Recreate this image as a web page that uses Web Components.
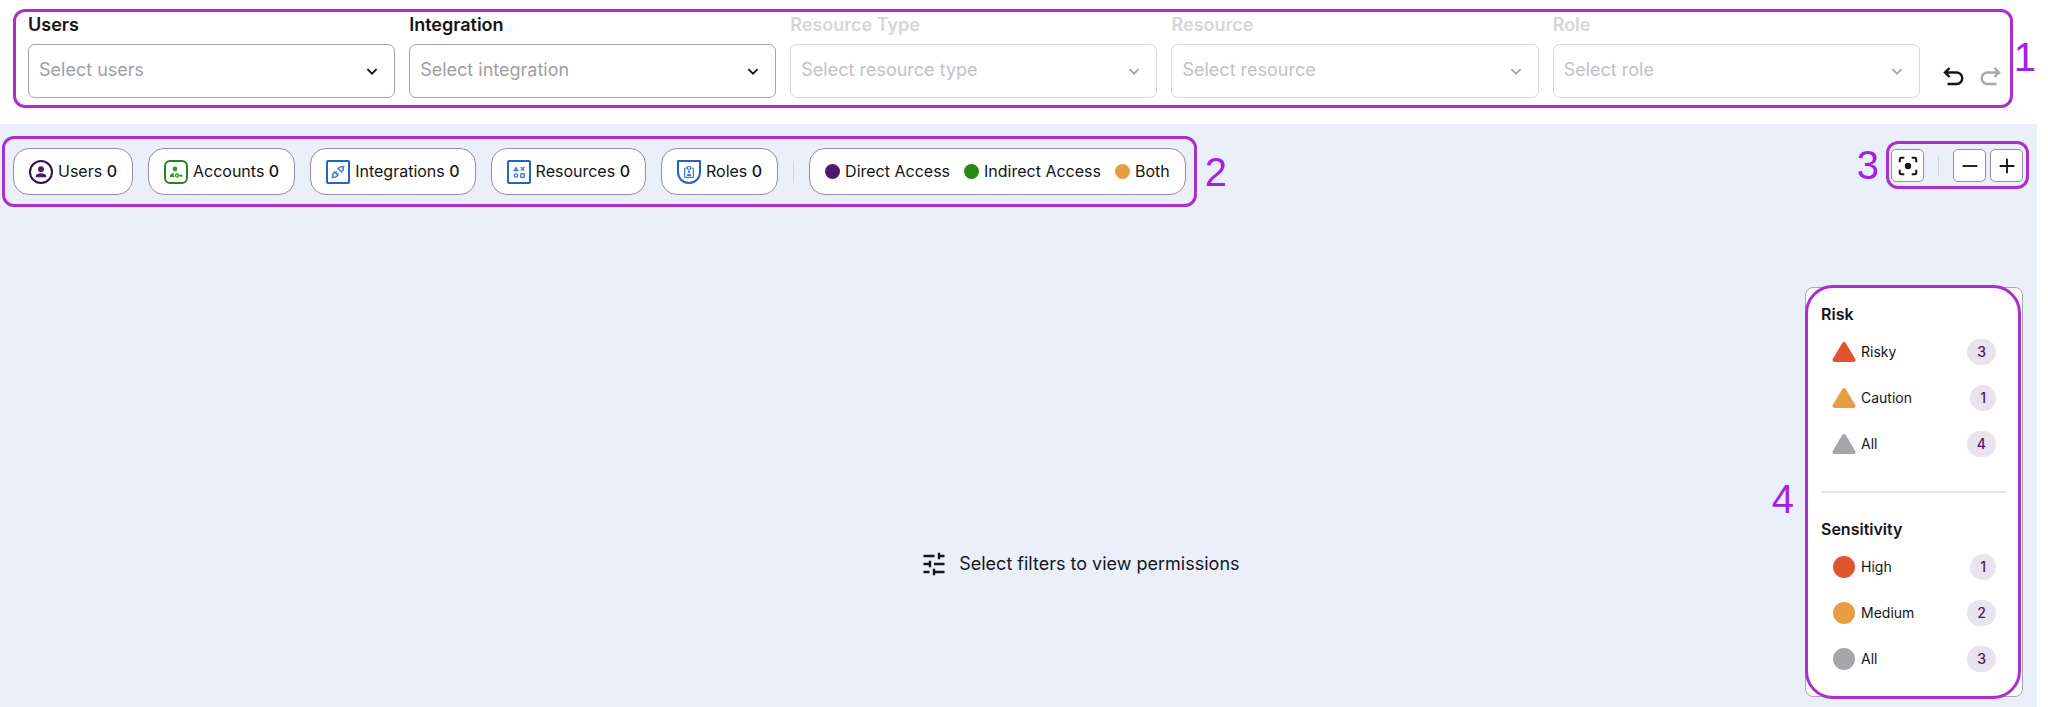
<!DOCTYPE html>
<html lang="en">
<head>
<meta charset="utf-8">
<title>Permissions</title>
<style>
    body {
        margin: 0;
        background: #fefefe;
        color: #141416;
        font-family: Inter, "Open Sans", sans-serif;
        --mark: #ab2fce;
        --line: #9a8aa5;
    }
</style>
</head>
<body>
<access-page></access-page>

<script>
const icons = {
    users: `<circle cx="12" cy="12" r="11" fill="#fff" stroke="#33104f" stroke-width="2"/>
        <circle cx="12" cy="9.2" r="2.9" fill="#4a1a6b"/><path d="M6.8 17.2V16c0-1.800 2.500-2.800 5.200-2.800s5.200 1 5.200 2.800v1.200z" fill="#4a1a6b"/>`,
    accounts: `<rect x="1" y="1" width="22" height="22" rx="5" fill="#fff" stroke="#1c8a14" stroke-width="2"/>
        <circle cx="11" cy="9" r="2.4" fill="#2c9a25"/><path d="M6 17v-1.200c0-1.500 1.700-2.600 4.200-2.800-.8 1.300-.6 2.800.5 4z" fill="#2c9a25"/>
        <circle cx="13" cy="15.5" r="1.5" fill="none" stroke="#2c9a25" stroke-width="1.3"/><path d="M14.500 15.500H18.500M17.300 15.500v1.500" fill="none" stroke="#2c9a25" stroke-width="1.3"/>`,
    integrations: `<rect x="1" y="1" width="22" height="22" rx="1" fill="#fff" stroke="#2563c4" stroke-width="2"/>
        <g transform="rotate(45 12 12)" fill="none" stroke="#3b78dc" stroke-width="1.4">
        <path d="M12 3v2.500M9.800 9.500V7.700a2.200 2.200 0 0 1 4.400 0v1.800M8.800 9.600h6.400M12 21v-2.500M9.800 14.500v1.800a2.200 2.200 0 0 0 4.400 0v-1.800M8.800 14.400h6.400M10.800 14.400v-2M13.200 14.400v-2"/></g>`,
    resources: `<rect x="1" y="1" width="22" height="22" rx="1" fill="#fff" stroke="#2563c4" stroke-width="2"/>
        <g fill="none" stroke="#3b78dc" stroke-width="1.3"><path d="M9 7.500l1.700 3H7.300zM13.800 7l3.600 3.600M17.400 7l-3.600 3.600"/>
        <rect x="13.8" y="13.8" width="3.5" height="3.5"/><circle cx="9" cy="15.5" r="1.7"/></g>`,
    roles: `<path d="M1 1h22v11c0 6-4.500 11-11 11S1 18 1 12z" fill="#fff" stroke="#2563c4" stroke-width="2" stroke-linejoin="round"/>
        <rect x="7.6" y="8" width="8.8" height="9.4" rx="1" fill="none" stroke="#3b78dc" stroke-width="1.2"/>
        <path d="M10.500 9.300V6.500h3v2.800z" fill="#fff" stroke="#3b78dc" stroke-width="1"/>
        <circle cx="12" cy="11.8" r="1.2" fill="#3b78dc"/><path d="M9.700 16v-.7c0-1.800 4.600-1.800 4.600 0v.7z" fill="#3b78dc"/>`,
    undo: `<path d="M8.500 2L4 6.500 8.500 11M4.500 6.500h11a5.700 5.700 0 0 1 0 11.500H6.500" fill="none" stroke="currentColor" stroke-width="2.4"/>`,
    redo: `<path d="M15.500 2L20 6.500 15.500 11M19.500 6.500h-11a5.700 5.700 0 0 0 0 11.500H17.500" fill="none" stroke="currentColor" stroke-width="2.4"/>`,
    center: `<path d="M3 8V4.500A1.500 1.500 0 0 1 4.500 3H8M16 3h3.500A1.500 1.500 0 0 1 21 4.500V8M21 16v3.500a1.500 1.500 0 0 1-1.500 1.500H16M8 21H4.500A1.500 1.500 0 0 1 3 19.500V16" fill="none" stroke="currentColor" stroke-width="2.2"/><circle cx="12" cy="12" r="3.5" fill="currentColor"/>`,
    minus: `<path d="M4 12h16" stroke="currentColor" stroke-width="2"/>`,
    plus: `<path d="M4 12h16M12 4v16" stroke="currentColor" stroke-width="2"/>`,
    tune: `<path d="M1.500 4h11M17 4h5.500M17 .8v6.400M1.500 12h5.500M8 8.800v6.400M12 12h10.500M1.500 20h6M12 20h10.500M12 16.800v6.400" fill="none" stroke="currentColor" stroke-width="2.4"/>`,
    triangle: `<path d="M12 4L21.500 20h-19z" fill="currentColor" stroke="currentColor" stroke-width="4" stroke-linejoin="round"/>`,
    circle: `<circle cx="12" cy="12" r="12" fill="currentColor"/>`,
    chevron: `<path d="M7 10l5 5 5-5" fill="none" stroke="currentColor" stroke-width="2"/>`
};

class BaseElement extends HTMLElement {
    constructor() {
        super();
        this.root = this.attachShadow({ mode: "open" });
    }
    connectedCallback() {
        this.root.innerHTML = this.render();
    }
    attr(name) {
        return this.getAttribute(name) || "";
    }
}

class UiIcon extends BaseElement {
    render() {
        return /*html*/`
            <style>
            :host { display: block; flex: none; width: 24px; height: 24px; }
            svg { display: block; width: 100%; height: 100%; }
            </style>
            <svg viewBox="0 0 24 24" aria-hidden="true">${icons[this.attr("name")]}</svg>`;
    }
}
customElements.define("ui-icon", UiIcon);

// Rounded outline with a big number next to it
class CalloutFrame extends BaseElement {
    render() {
        return /*html*/`
            <style>
            :host { display: flex; align-items: center; }
            .frame { box-sizing: border-box; border: 3px solid var(--mark); border-radius: 12px; flex: 1; }
            .number {
                color: #a31fe6;
                font: 40px/40px "Liberation Sans", sans-serif;
            }
            :host([side="left"]) .number { order: -1; margin-right: 7px; }
            :host([side="right"]) .number { margin-left: 8px; }
            :host([tight]) .number { margin-left: 1px; padding-bottom: 4px; }
            /* over: the outline is drawn on top of the content */
            :host([over]) .frame { position: relative; border: 0; }
            :host([over]) .frame::after {
                content: "";
                position: absolute;
                inset: -2px 2px -2px 0;
                border: 3px solid var(--mark);
                border-radius: 28px;
                pointer-events: none;
            }
            :host([over]) .number { margin-right: 11px; padding-top: 14px; }
            </style>
            <div class="frame"><slot></slot></div>
            <span class="number">${this.attr("number")}</span>`;
    }
}
customElements.define("callout-frame", CalloutFrame);

class FilterSelect extends BaseElement {
    render() {
        const off = this.hasAttribute("disabled");
        return /*html*/`
            <style>
            :host { display: flex; flex-direction: column; gap: 6px; flex: 1; min-width: 0; }
            label { font-size: 18px; line-height: 26px; font-weight: 600; }
            .box { display: grid; align-items: center; }
            .box > * { grid-area: 1 / 1; }
            select {
                appearance: none;
                width: 100%;
                height: 54px;
                padding: 0 40px 2px 10px;
                border: 1px solid #a3a3a5;
                border-radius: 7px;
                background: #fefefe;
                color: #a0a0a2;
                font: 18px/24px Inter, sans-serif;
                opacity: 1;
            }
            ui-icon { justify-self: end; margin-right: 12px; pointer-events: none; width: 22px; height: 22px; }
            :host([disabled]) label { color: #d6d6d8; }
            :host([disabled]) select { border-color: #d8d8da; color: #c2c2c4; }
            :host([disabled]) ui-icon { color: #a6a6a8; }
            </style>
            <label for="field">${this.attr("label")}</label>
            <div class="box">
                <select id="field" ${off ? "disabled" : ""}><option>${this.attr("placeholder")}</option></select>
                <ui-icon name="chevron"></ui-icon>
            </div>`;
    }
}
customElements.define("filter-select", FilterSelect);

class IconButton extends BaseElement {
    render() {
        return /*html*/`
            <style>
            :host { display: block; }
            button {
                display: grid;
                place-items: center;
                padding: 0;
                border: 0;
                background: none;
                color: inherit;
            }
            button:disabled { color: #a8a8aa; }
            :host([boxed]) button {
                width: 33px;
                height: 33px;
                border: 1px solid var(--line);
                border-radius: 5px;
                background: #fefefe;
            }
            :host([boxed]) ui-icon { width: 22px; height: 22px; }
            </style>
            <button type="button" aria-label="${this.attr("label")}" ${this.hasAttribute("disabled") ? "disabled" : ""}>
                <ui-icon name="${this.attr("icon")}"></ui-icon>
            </button>`;
    }
}
customElements.define("icon-button", IconButton);

class FilterBar extends BaseElement {
    render() {
        return /*html*/`
            <style>
            :host { display: flex; align-items: flex-end; gap: 21px; padding: 0 7px 7px 12px; }
            .fields { display: flex; gap: 14px; flex: 1; }
            .history { display: flex; gap: 14px; padding-bottom: 8px; }
            </style>
            <div class="fields">
                <filter-select label="Users" placeholder="Select users"></filter-select>
                <filter-select label="Integration" placeholder="Select integration"></filter-select>
                <filter-select label="Resource Type" placeholder="Select resource type" disabled></filter-select>
                <filter-select label="Resource" placeholder="Select resource" disabled></filter-select>
                <filter-select label="Role" placeholder="Select role" disabled></filter-select>
            </div>
            <div class="history">
                <icon-button icon="undo" label="Undo"></icon-button>
                <icon-button icon="redo" label="Redo" disabled></icon-button>
            </div>`;
    }
}
customElements.define("filter-bar", FilterBar);

class InfoPill extends BaseElement {
    render() {
        return /*html*/`
            <style>
            :host {
                box-sizing: border-box;
                display: flex;
                align-items: center;
                gap: 14px;
                height: 47px;
                padding: 0 15px;
                border: 1px solid var(--line);
                border-radius: 16px;
                background: #fefefe;
                font-size: 16px;
                line-height: 24px;
                white-space: nowrap;
            }
            </style>
            <slot></slot>`;
    }
}
customElements.define("info-pill", InfoPill);

class CountLabel extends BaseElement {
    render() {
        return /*html*/`
            <style>
            :host { display: flex; align-items: center; gap: 5px; }
            span { padding-bottom: 2px; }
            b { font-weight: 500; }
            </style>
            <ui-icon name="${this.attr("icon")}"></ui-icon>
            <span><slot></slot> <b>${this.attr("count")}</b></span>`;
    }
}
customElements.define("count-label", CountLabel);

class LegendItem extends BaseElement {
    render() {
        return /*html*/`
            <style>
            :host { display: flex; align-items: center; gap: 5px; }
            span { padding-bottom: 2px; }
            i { width: 15px; height: 15px; border-radius: 50%; background: ${this.attr("color")}; }
            </style>
            <i></i><span><slot></slot></span>`;
    }
}
customElements.define("legend-item", LegendItem);

class StatsRow extends BaseElement {
    render() {
        return /*html*/`
            <style>
            :host { display: flex; align-items: center; gap: 15px; padding: 9px 8px; }
            hr { width: 1px; height: 22px; margin: 0; border: 0; background: #d3d5e0; }
            </style>
            <info-pill><count-label icon="users" count="0">Users</count-label></info-pill>
            <info-pill><count-label icon="accounts" count="0">Accounts</count-label></info-pill>
            <info-pill><count-label icon="integrations" count="0">Integrations</count-label></info-pill>
            <info-pill><count-label icon="resources" count="0">Resources</count-label></info-pill>
            <info-pill><count-label icon="roles" count="0">Roles</count-label></info-pill>
            <hr>
            <info-pill>
                <legend-item color="#4f196b">Direct Access</legend-item>
                <legend-item color="#238c17">Indirect Access</legend-item>
                <legend-item color="#e79e42">Both</legend-item>
            </info-pill>`;
    }
}
customElements.define("stats-row", StatsRow);

class ZoomControls extends BaseElement {
    render() {
        return /*html*/`
            <style>
            :host { display: flex; align-items: center; gap: 4px; padding: 5px 3px 4px 2px; }
            hr { width: 1px; height: 22px; margin: 0 10px; border: 0; background: #d3d5e0; }
            </style>
            <icon-button boxed icon="center" label="Center"></icon-button>
            <hr>
            <icon-button boxed icon="minus" label="Zoom out"></icon-button>
            <icon-button boxed icon="plus" label="Zoom in"></icon-button>`;
    }
}
customElements.define("zoom-controls", ZoomControls);

class LevelRow extends BaseElement {
    render() {
        return /*html*/`
            <style>
            :host { display: flex; align-items: center; gap: 5px; padding: 0 10px 0 11px; font-size: 14px; line-height: 26px; }
            ui-icon { color: ${this.attr("color")}; }
            ui-icon[name="circle"] { width: 22px; height: 22px; margin: 0 1px; }
            span { flex: 1; }
            b {
                padding: 0 10px;
                border-radius: 13px;
                background: #e9e3ed;
                color: #4f196b;
                font-weight: 500;
            }
            </style>
            <ui-icon name="${this.attr("shape")}"></ui-icon>
            <span><slot></slot></span>
            <b>${this.attr("count")}</b>`;
    }
}
customElements.define("level-row", LevelRow);

class LevelGroup extends BaseElement {
    render() {
        return /*html*/`
            <style>
            :host { display: block; }
            h2 { margin: 0 0 13px; font-size: 16px; line-height: 24px; font-weight: 600; }
            div { display: grid; gap: 20px; }
            </style>
            <h2>${this.attr("heading")}</h2>
            <div><slot></slot></div>`;
    }
}
customElements.define("level-group", LevelGroup);

class LevelPanel extends BaseElement {
    render() {
        return /*html*/`
            <style>
            :host {
                box-sizing: border-box;
                display: block;
                width: 218px;
                padding: 14px 16px 24px 15px;
                border: 1px solid #aaa4b0;
                border-radius: 8px;
                background: #fefefe;
            }
            hr { height: 2px; margin: 34px 0 24px; border: 0; background: #e4e4e7; }
            </style>
            <level-group heading="Risk">
                <level-row shape="triangle" color="#e0542f" count="3">Risky</level-row>
                <level-row shape="triangle" color="#e79e42" count="1">Caution</level-row>
                <level-row shape="triangle" color="#a5a6aa" count="4">All</level-row>
            </level-group>
            <hr>
            <level-group heading="Sensitivity">
                <level-row shape="circle" color="#e0542f" count="1">High</level-row>
                <level-row shape="circle" color="#e79e42" count="2">Medium</level-row>
                <level-row shape="circle" color="#a5a6aa" count="3">All</level-row>
            </level-group>`;
    }
}
customElements.define("level-panel", LevelPanel);

class EmptyState extends BaseElement {
    render() {
        return /*html*/`
            <style>
            :host { display: flex; align-items: center; justify-content: center; gap: 13px; font-size: 18px; line-height: 26px; color: #15171f; }
            </style>
            <ui-icon name="tune"></ui-icon>
            <span><slot></slot></span>`;
    }
}
customElements.define("empty-state", EmptyState);

class AccessPage extends BaseElement {
    render() {
        return /*html*/`
            <style>
            :host { display: flex; flex-direction: column; min-height: 100vh; }
            header { padding: 9px 12px 16px 13px; }
            main {
                flex: 1;
                display: flex;
                flex-direction: column;
                margin-right: 11px;
                background: #eaeffa;
            }
            .toolbar { display: flex; justify-content: space-between; align-items: center; padding: 12px 8px 0 2px; }
            .zoom { padding-bottom: 13px; }
            .canvas { flex: 1; display: flex; align-items: flex-start; padding: 80px 14px 8px 0; }
            empty-state { flex: 1; align-self: stretch; padding: 142px 0 0 390px; }
            </style>
            <header>
                <callout-frame number="1" side="right" tight><filter-bar></filter-bar></callout-frame>
            </header>
            <main>
                <div class="toolbar">
                    <callout-frame number="2" side="right"><stats-row></stats-row></callout-frame>
                    <callout-frame class="zoom" number="3" side="left"><zoom-controls></zoom-controls></callout-frame>
                </div>
                <div class="canvas">
                    <empty-state>Select filters to view permissions</empty-state>
                    <callout-frame number="4" side="left" over><level-panel></level-panel></callout-frame>
                </div>
            </main>`;
    }
}
customElements.define("access-page", AccessPage);
</script>
</body>
</html>
